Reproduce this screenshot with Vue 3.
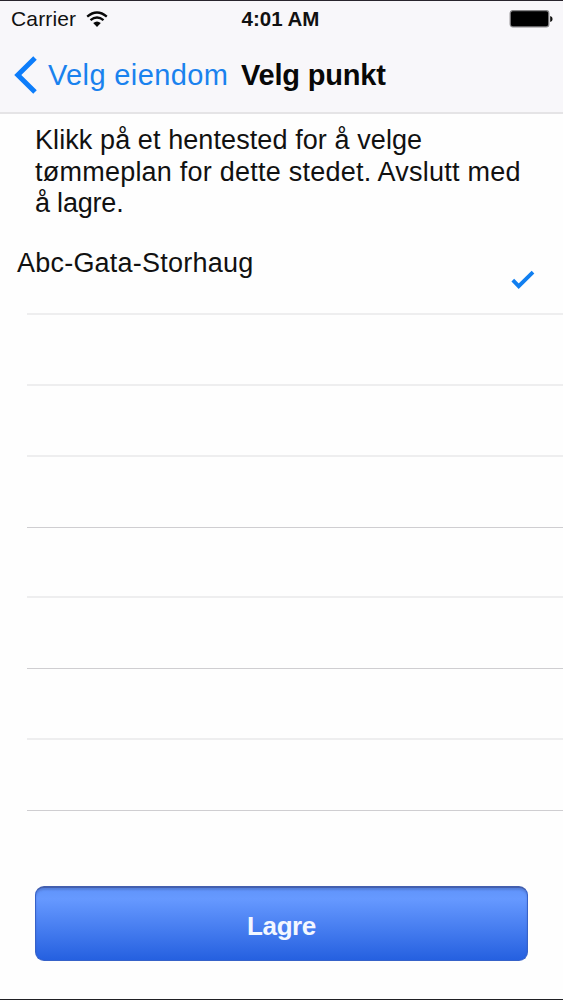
<script setup>
import { ref } from 'vue';

const rows = ref([
  { name: 'Abc-Gata-Storhaug', selected: true },
  { name: '', selected: false },
  { name: '', selected: false },
  { name: '', selected: false, strong: true },
  { name: '', selected: false },
  { name: '', selected: false, strong: true },
  { name: '', selected: false },
  { name: '', selected: false, strong: true },
]);

const toggle = (row) => {
  if (row.name) row.selected = !row.selected;
};
</script>

<template>
  <div class="screen">
    <header class="header">
      <div class="status">
        <div class="status__left">
          <span class="carrier">Carrier</span>
          <svg class="wifi" width="22" height="17" viewBox="0 0 22 17">
            <path d="M1.2 5.6 Q11 -2.6 20.8 5.6" fill="none" stroke="#080808" stroke-width="2.3" />
            <path d="M4.5 9.2 Q11 3.7 17.5 9.2" fill="none" stroke="#080808" stroke-width="2.3" />
            <path d="M7.2 12.1 Q11 8.7 14.8 12.1 L11 16 Z" fill="#080808" />
          </svg>
        </div>
        <span class="clock">4:01 AM</span>
        <svg class="battery" width="44" height="18" viewBox="0 0 44 18">
          <rect x="1.2" y="0.7" width="38.6" height="16.2" rx="2.6" fill="#000" stroke="#858486" stroke-width="1.2" />
          <path d="M41.2 6 Q43.6 6.5 43.6 9 Q43.6 11.5 41.2 12 Z" fill="#111" />
        </svg>
      </div>
      <nav class="nav">
        <a class="back">
          <svg width="23" height="38" viewBox="0 0 23 38">
            <path d="M21 2 L3.8 19 L21 36" fill="none" stroke="#0d7dfa" stroke-width="5" />
          </svg>
          <span class="back__label">Velg eiendom</span>
        </a>
        <h1 class="title">Velg punkt</h1>
      </nav>
    </header>

    <p class="intro">
      <span class="intro__line line-1">Klikk på et hentested for å velge</span>
      <span class="intro__line line-2">tømmeplan for dette stedet. Avslutt med</span>
      <span class="intro__line line-3">å lagre.</span>
    </p>

    <ul class="list">
      <li v-for="(row, i) in rows" :key="i" class="row" :class="{ 'row--strong': row.strong }" @click="toggle(row)">
        <span class="row__name">{{ row.name }}</span>
        <svg v-if="row.selected" class="check" width="24" height="20" viewBox="0 0 24 20">
          <path d="M1.8 10.2 L7.7 16.2 L22 2.2" fill="none" stroke="#117ff0" stroke-width="3.8" />
        </svg>
      </li>
    </ul>

    <div class="actions">
      <button class="save" type="button">Lagre</button>
    </div>
  </div>
</template>

<style>
body {
  margin: 0;
}
</style>

<style scoped>
.screen {
  box-sizing: border-box;
  display: flex;
  flex-direction: column;
  width: 563px;
  height: 1000px;
  overflow: hidden;
  background: #fefefe;
  border-top: 1px solid #29252d;
  border-bottom: 1px solid #202024;
  color: #111;
  font-family: 'Liberation Sans', Arial, sans-serif;
}

.header {
  box-sizing: border-box;
  flex: none;
  height: 113px;
  background: #f8f7fa;
  border-bottom: 2px solid #e5e4e6;
}

.status {
  display: grid;
  grid-template-columns: 1fr auto 1fr;
  align-items: center;
  height: 36px;
  padding: 0 10px 0 11px;
}

.status__left {
  display: flex;
  align-items: center;
  gap: 10px;
}

.carrier {
  font-size: 21px;
  letter-spacing: 0.15px;
}

.clock {
  margin-right: 3px;
  font-size: 20.5px;
  font-weight: bold;
}

.battery {
  justify-self: end;
}

.nav {
  display: flex;
  align-items: center;
  height: 76px;
  padding-left: 14px;
}

.back {
  display: flex;
  align-items: center;
  gap: 11px;
  color: #1a82ee;
}

.back__label {
  width: 193px;
  font-size: 29px;
  letter-spacing: 0.37px;
  white-space: nowrap;
}

.title {
  margin: 0;
  color: #080808;
  font-size: 29px;
  letter-spacing: -0.2px;
  white-space: nowrap;
}

.intro {
  flex: none;
  height: 115px;
  margin: 0;
  padding: 11px 0 0 35px;
  box-sizing: border-box;
}

.intro__line {
  display: block;
  font-size: 27px;
  line-height: 31.5px;
  white-space: nowrap;
}

.line-1 {
  letter-spacing: 0.09px;
}

.line-2 {
  letter-spacing: 0.23px;
}

.line-3 {
  letter-spacing: -0.2px;
}

.list {
  flex: none;
  margin: 0;
  padding: 15px 0 0;
  list-style: none;
}

.row {
  display: flex;
  justify-content: space-between;
  box-sizing: border-box;
  height: 70.9px;
  padding: 4px 28px 0 17px;
  background: linear-gradient(#eeeeef, #eeeeef) 27px 100% / 100% 2px no-repeat;
}

.row--strong {
  background: linear-gradient(#cfced1, #cfced1) 27px 100% / 100% 1px no-repeat;
}

.row__name {
  font-size: 27px;
  line-height: 31px;
  letter-spacing: 0.22px;
  white-space: nowrap;
}

.check {
  margin-top: 22px;
}

.actions {
  flex: none;
  padding: 75px 35px 0 35px;
}

.save {
  display: block;
  width: 100%;
  height: 75px;
  padding: 5px 0 0;
  border: 1px solid #3662c9;
  border-top: 2px solid #435fae;
  border-radius: 9px;
  background: linear-gradient(#6094fa, #6699ff 15%, #2560e0);
  box-shadow: inset 0 2px 2px rgba(60, 85, 160, 0.35);
  color: #f3f7ff;
  font-family: inherit;
  font-size: 26px;
  font-weight: bold;
  letter-spacing: -0.4px;
}
</style>
